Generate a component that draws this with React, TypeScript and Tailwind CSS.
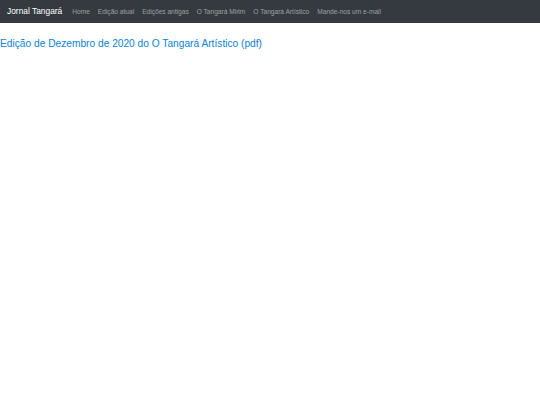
export default function App() {
  const links = ['Home', 'Edição atual', 'Edições antigas', 'O Tangará Mirim', 'O Tangará Artístico', 'Mande-nos um e-mail'];
  return (
    <div className="min-h-[405px] bg-white" style={{ fontFamily: '"Liberation Sans", Arial, sans-serif' }}>
      <nav className="flex h-[23px] items-center bg-[#343a40] pl-[7px]">
        <span className="mr-[10px] text-[8.4px] text-white">Jornal Tangará</span>
        <div className="flex gap-[8px]">
          {links.map(l => (
            <a key={l} className="text-[6.6px] text-[rgba(255,255,255,0.5)]">{l}</a>
          ))}
        </div>
      </nav>
      <a className="mt-[14px] block text-[10.2px] leading-[13px] text-[#0a84d8]">Edição de Dezembro de 2020 do O Tangará Artístico (pdf)</a>
    </div>
  );
}
